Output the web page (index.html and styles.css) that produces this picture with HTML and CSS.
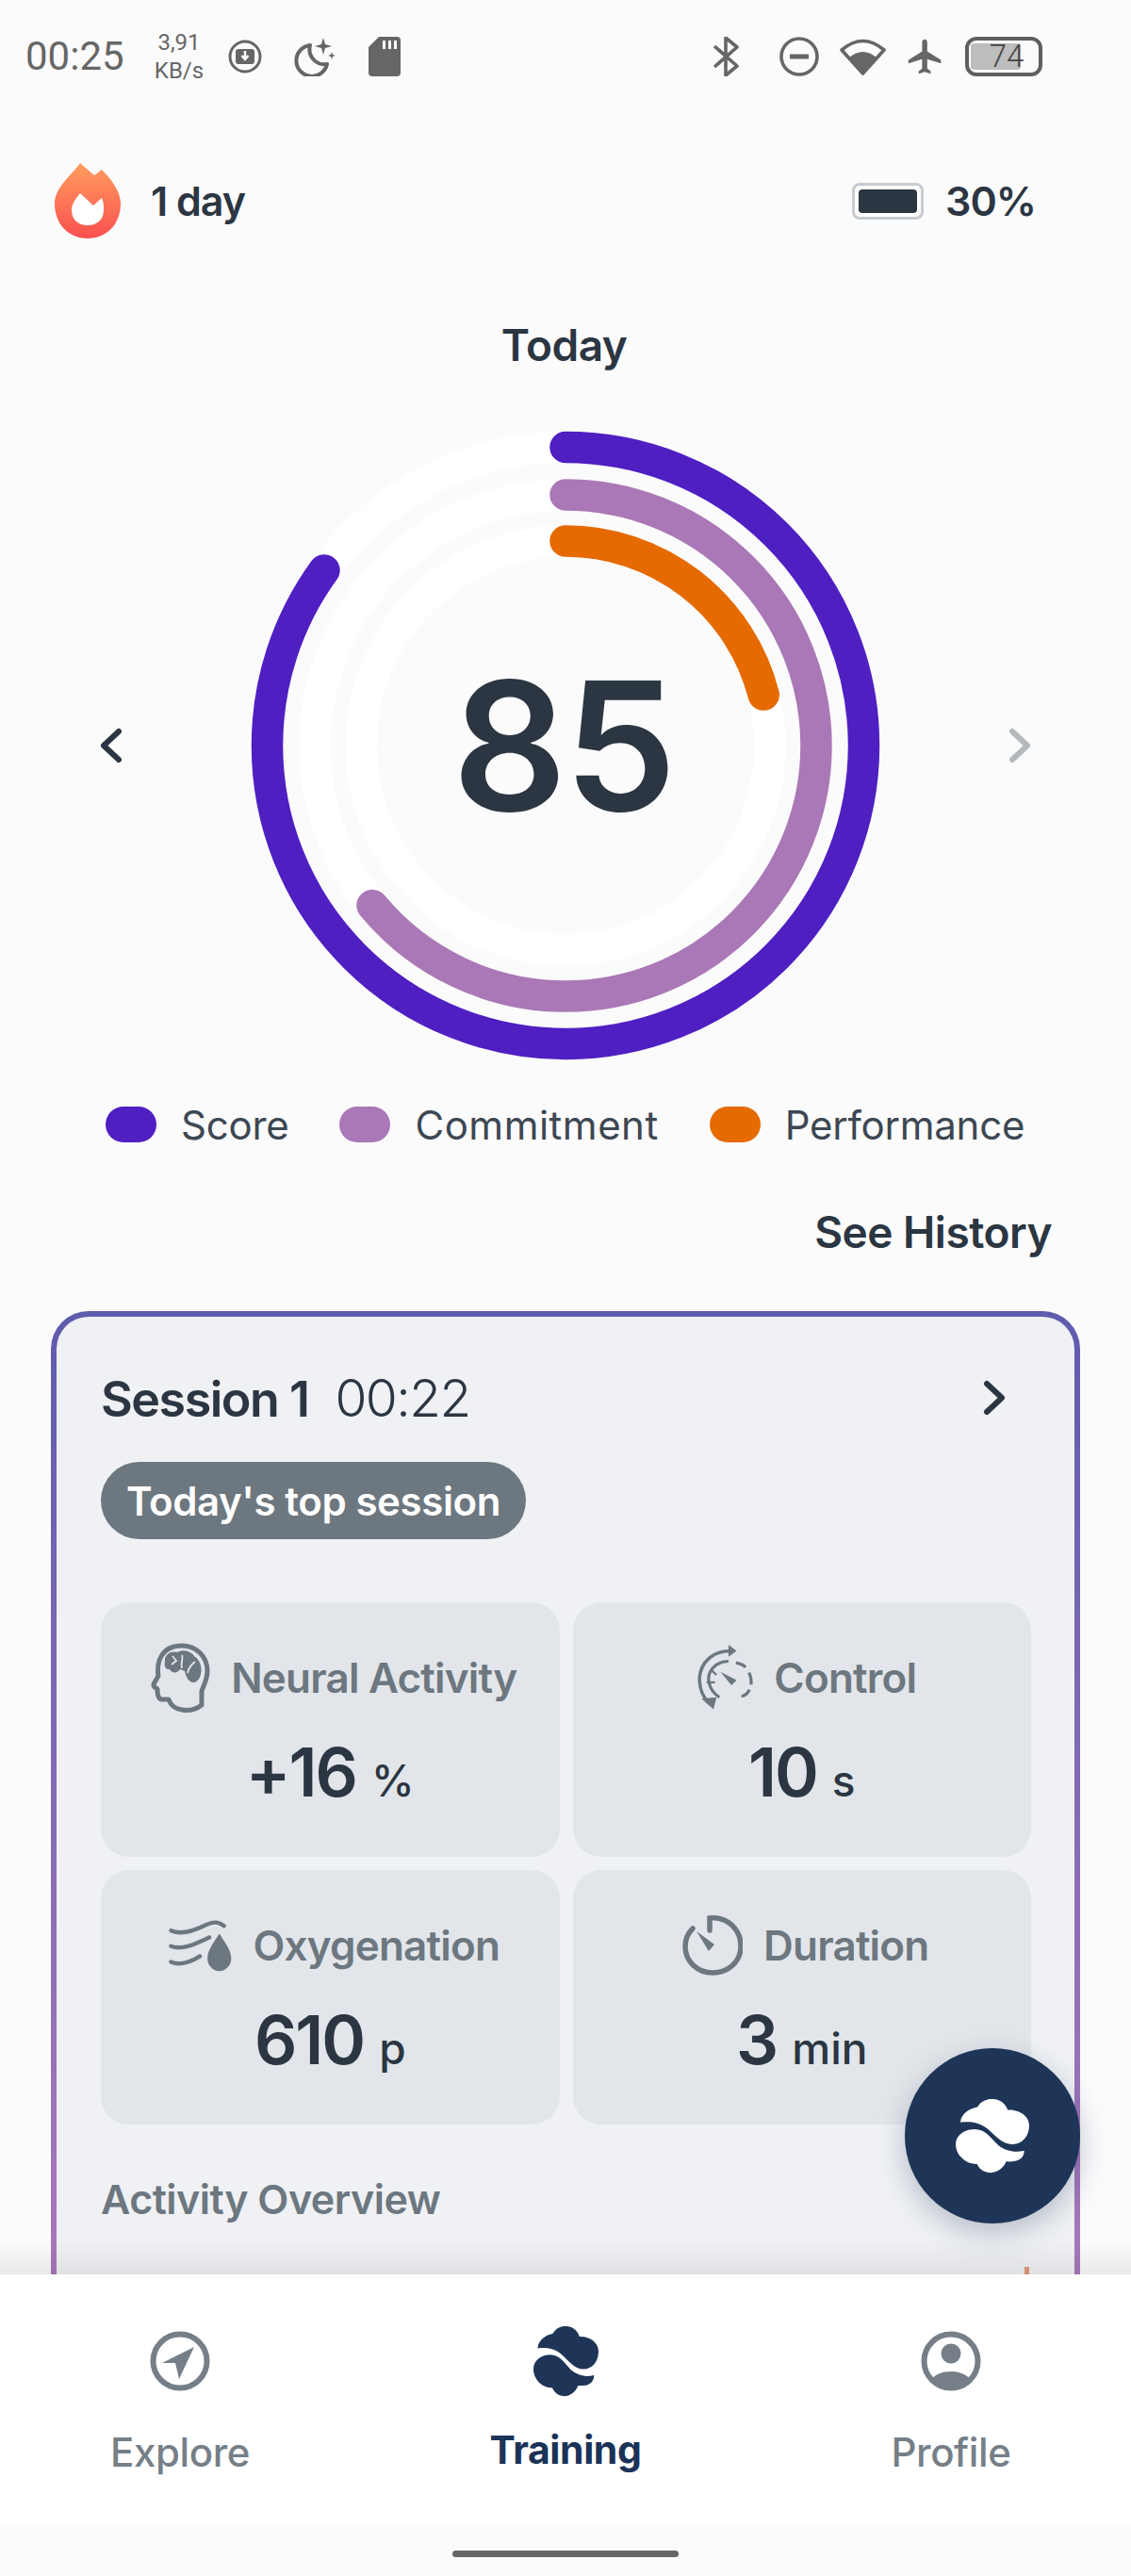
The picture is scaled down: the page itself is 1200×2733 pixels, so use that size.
FILE: index.html
```html
<!DOCTYPE html>
<html lang="en">
  <head>
    <meta charset="UTF-8" />
    <meta name="viewport" content="width=device-width, initial-scale=1.0" />
    <title>Training</title>
    <link rel="stylesheet" href="styles.css">
  </head>
  <body>
    <svg class="defs" xmlns="http://www.w3.org/2000/svg">
      <symbol id="logo" viewBox="45 48 233 240" preserveAspectRatio="none">
        <path d="M60 125C62 100 85 82 115 76C125 55 150 48 170 52C190 55 205 70 210 86C245 84 278 105 278 135C278 170 255 195 225 195C190 195 170 165 145 145C120 125 90 122 60 125Z" />
        <path d="M262 215C262 245 235 252 205 250C195 275 170 288 150 285C130 283 118 270 113 258C75 258 45 228 45 195C45 165 75 147 105 147C140 147 155 175 180 198C205 218 235 222 262 215Z" />
      </symbol>
      <symbol id="chevron" viewBox="0 0 24 38">
        <path d="M4 4L20 19L4 34" fill="none" stroke="currentColor" stroke-width="6" stroke-linecap="round" stroke-linejoin="round" />
      </symbol>
    </svg>

    <div class="phone">
      <div class="status-bar">
        <div class="status-left">
          <span class="clock">00:25</span>
          <span class="speed"><span>3,91</span><span>KB/s</span></span>
          <svg class="sys-icon" width="36" height="36" viewBox="0 0 36 36">
            <circle cx="18" cy="18" r="16" fill="none" stroke="#666" stroke-width="3" />
            <rect x="8" y="10" width="20" height="16" rx="3" fill="#666" />
            <path d="M18 12v7M14.500 17l3.500 4 3.500-4" fill="none" stroke="#fff" stroke-width="2.400" />
          </svg>
          <svg class="sys-icon moon" width="44" height="41" viewBox="0 0 44 41">
            <path d="M17 8A16.500 16.500 0 1 0 35 28C24 30 14 20 17 8Z" fill="none" stroke="#666" stroke-width="4" stroke-linejoin="round" />
            <path d="M31 0L33 7L40 9L33 11L31 18L29 11L22 9L29 7Z M40 15L41 18L44 19L41 20L40 23L39 20L36 19L39 18Z" fill="#666" />
          </svg>
          <svg class="sys-icon sd" width="34" height="42" viewBox="0 0 34 42">
            <path d="M11 0H30a4 4 0 0 1 4 4V38a4 4 0 0 1-4 4H4a4 4 0 0 1-4-4V11Z" fill="#666" />
            <path d="M15 4h3v9h-3zM21 4h3v9h-3zM27 4h3v9h-3z" fill="#fff" />
          </svg>
        </div>
        <div class="status-right">
          <svg class="bluetooth" width="28" height="42" viewBox="0 0 28 42">
            <path d="M2 10L26 31L14 41V1L26 11L2 32" fill="none" stroke="#666" stroke-width="3.600" stroke-linejoin="round" />
          </svg>
          <svg width="42" height="42" viewBox="0 0 42 42">
            <circle cx="21" cy="21" r="19" fill="none" stroke="#666" stroke-width="3.600" />
            <path d="M11 21H31" stroke="#666" stroke-width="5" />
          </svg>
          <svg width="49" height="41" viewBox="0 0 49 41">
            <path d="M24.500 38L2 13Q24.500 -6 47 13Z" fill="none" stroke="#666" stroke-width="3.600" stroke-linejoin="round" />
            <path d="M24.500 38L10 21Q24.500 9 39 21Z" fill="#666" />
          </svg>
          <svg width="40" height="42" viewBox="1 1.500 22 21">
            <path d="M21 16v-2l-8-5V3.500c0-.83-.67-1.500-1.500-1.500S10 2.670 10 3.500V9l-8 5v2l8-2.500V19l-2 1.500V22l3.500-1 3.500 1v-1.500L13 19v-5.500l8 2.500z" fill="#666" />
          </svg>
          <div class="sys-battery"><span class="sys-battery-fill"></span><span class="sys-battery-text">74</span></div>
        </div>
      </div>

      <div class="content">
        <div class="top-row">
          <div class="top-item">
            <svg class="flame" width="70" height="80" viewBox="0 0 70 80">
              <defs>
                <linearGradient id="flame-fill" x1="0" y1="0" x2="0" y2="1">
                  <stop offset="0" stop-color="#ff9d5e" />
                  <stop offset="1" stop-color="#fa5050" />
                </linearGradient>
              </defs>
              <path d="M27 0L42 13L50 7C60 17 70 30 70 43C70 65 55 80 35 80C15 80 0 65 0 43C0 26 17 14 27 0Z" fill="url(#flame-fill)" />
              <path d="M27 32L41 45L50 37C52 42 52 45 52 50C52 60 45 66 35 66C25 66 18 60 18 50C18 43 23 37 27 32Z" fill="#fff" />
            </svg>
            <span class="top-text">1 day</span>
          </div>
          <div class="top-item battery-item">
            <div class="device-battery"><span class="device-battery-fill"></span></div>
            <span class="top-text">30%</span>
          </div>
        </div>

        <h1 class="today">Today</h1>

        <div class="ring-row">
          <svg class="chevron-nav" width="24" height="38"><use href="#chevron" transform="matrix(-1 0 0 1 24 0)" /></svg>
          <div class="ring">
            <svg class="ring-svg" width="680" height="680" viewBox="0 0 680 680">
              <g fill="none" stroke-width="33.500" stroke-linecap="round">
                <circle cx="340" cy="340" r="316.500" stroke="#fff" />
                <circle cx="340" cy="340" r="266" stroke="#fff" />
                <circle cx="340" cy="340" r="217" stroke="#fff" />
                <circle class="arc" cx="340" cy="340" r="316.500" stroke="#4f1fc2" pathLength="100" stroke-dasharray="85 100" />
                <circle class="arc" cx="340" cy="340" r="266" stroke="#aa78b6" pathLength="100" stroke-dasharray="64 100" />
                <circle class="arc" cx="340" cy="340" r="217" stroke="#e56a00" pathLength="100" stroke-dasharray="21 100" />
              </g>
            </svg>
            <span class="ring-score">85</span>
          </div>
          <svg class="chevron-nav disabled" width="24" height="38"><use href="#chevron" /></svg>
        </div>

        <div class="legend">
          <span class="legend-item"><span class="dot dot-score"></span>Score</span>
          <span class="legend-item wide"><span class="dot dot-commitment"></span>Commitment</span>
          <span class="legend-item"><span class="dot dot-performance"></span>Performance</span>
        </div>

        <div class="see-history">See History</div>

        <div class="session-card">
          <div class="session-head">
            <div class="session-title"><strong>Session 1</strong><span>00:22</span></div>
            <svg class="session-chevron" width="24" height="38"><use href="#chevron" /></svg>
          </div>
          <span class="top-pill">Today's top session</span>

          <div class="stats">
            <div class="stat">
              <div class="stat-head">
                <svg width="63" height="75" viewBox="0 0 63 75">
                  <path d="M33 3C48 3 60 14 60 30C60 39 56 45 54 51V66C46 72 38 72 33 71C26 70 21 66 19 60H12C8 60 7 55 7 49C3 47 2 45 4 42L8 35C6 22 10 3 33 3Z" fill="none" stroke="currentColor" stroke-width="5" stroke-linejoin="round" />
                  <path d="M15 20C14 12 22 8 28 10C33 7 42 8 46 14C52 18 55 26 53 33C52 40 46 44 42 41C38 38 37 34 36 30L31 28C28 33 22 32 20 28C15 28 14 24 15 20Z" fill="currentColor" />
                  <path d="M23 14L27 19L22 23M33 13C35 17 31 21 33 27M47 20C43 23 40 27 39 32" fill="none" stroke="#e2e6ea" stroke-width="1.800" />
                </svg>
                <span>Neural Activity</span>
              </div>
              <div class="stat-value">+16<span class="unit">%</span></div>
            </div>
            <div class="stat">
              <div class="stat-head">
                <svg width="62" height="70" viewBox="22 25 195 220">
                  <g fill="none" stroke="currentColor" stroke-width="11">
                    <path d="M72 222C30 180 25 110 70 70C90 52 115 45 145 45" />
                    <path d="M105 200C70 180 55 130 85 100C100 85 120 80 135 80" stroke-width="10" />
                    <path d="M160 85C175 88 185 92 192 100M203 118C212 135 212 145 210 158M205 175C200 187 190 195 178 197" stroke-width="10" />
                    <path d="M62 150H90M80 112L95 125" stroke-width="7" />
                  </g>
                  <path d="M135 25L162 45L135 65ZM45 205L85 240L95 200Z M108 115L162 143L145 160Z" fill="currentColor" />
                </svg>
                <span>Control</span>
              </div>
              <div class="stat-value">10<span class="unit">s</span></div>
            </div>
            <div class="stat">
              <div class="stat-head">
                <svg width="68" height="58" viewBox="85 20 205 175">
                  <g fill="none" stroke="currentColor" stroke-width="13" stroke-linecap="round">
                    <path d="M95 60C130 75 170 60 200 45C235 28 250 33 265 45" />
                    <path d="M95 110C130 123 170 105 218 82" />
                    <path d="M95 160C125 173 160 160 188 142" />
                  </g>
                  <path d="M250 70C265 95 288 120 288 150C288 172 270 190 250 190C230 190 212 172 212 150C212 120 235 95 250 70Z" fill="currentColor" />
                </svg>
                <span>Oxygenation</span>
              </div>
              <div class="stat-value">610<span class="unit">p</span></div>
            </div>
            <div class="stat">
              <div class="stat-head">
                <svg width="64" height="64" viewBox="0 0 64 64">
                  <path d="M29 16V3C48 1 62 15 62 33C62 49 49 61 32 61C16 61 3 49 3 33C3 25 6 19 11 14" fill="none" stroke="currentColor" stroke-width="5.500" stroke-linecap="round" />
                  <path d="M15 17L34 31L28 38Z" fill="currentColor" />
                </svg>
                <span>Duration</span>
              </div>
              <div class="stat-value">3<span class="unit">min</span></div>
            </div>
          </div>

          <h2 class="overview">Activity Overview</h2>
          <div class="chart-peak"></div>
        </div>

        <div class="fab"><svg width="78" height="80"><use href="#logo" /></svg></div>
        <div class="nav-shadow"></div>
      </div>

      <nav class="bottom-nav">
        <div class="nav-item">
          <svg class="nav-icon" width="64" height="76" viewBox="0 -6 64 76">
            <circle cx="32" cy="32" r="28.500" fill="none" stroke="currentColor" stroke-width="6" />
            <path d="M47 17L13 34H27L31 51Z" fill="currentColor" />
          </svg>
          <span>Explore</span>
        </div>
        <div class="nav-item active">
          <svg class="nav-icon" width="69" height="76"><use href="#logo" /></svg>
          <span>Training</span>
        </div>
        <div class="nav-item">
          <svg class="nav-icon" width="64" height="76" viewBox="0 -6 64 76">
            <circle cx="32" cy="32" r="28.500" fill="none" stroke="currentColor" stroke-width="6" />
            <circle cx="32" cy="24" r="10.500" fill="currentColor" />
            <path d="M11 52C15 46 23 43 32 43C41 43 49 46 53 52C47 58 40 61 32 61C24 61 17 58 11 52Z" fill="currentColor" />
          </svg>
          <span>Profile</span>
        </div>
      </nav>

      <div class="home-area"><span class="home-bar"></span></div>
    </div>
  </body>
</html>
```

FILE: styles.css
```css
:root {
  --ink: #2b3642;
  --muted: #6d7780;
  --navy: #1f3557;
  --page: #fbfbfc;
}

* {
  box-sizing: border-box;
}

body {
  margin: 0;
  width: 1200px;
  height: 2733px;
  background: var(--page);
  font-family: "Inter", "Liberation Sans", sans-serif;
  color: var(--ink);
}

.defs {
  display: none;
}

.phone {
  width: 1200px;
  height: 2733px;
  display: flex;
  flex-direction: column;
  overflow: hidden;
}

/* status bar */
.status-bar {
  height: 120px;
  flex: none;
  display: flex;
  align-items: center;
  justify-content: space-between;
  padding: 0 94px 0 27px;
  font-family: "Roboto", sans-serif;
  color: #666;
}

.status-left,
.status-right {
  display: flex;
  align-items: center;
}

.clock {
  font-size: 42px;
  width: 135px;
  line-height: 42px;
}

.speed {
  display: flex;
  flex-direction: column;
  align-items: center;
  width: 56px;
  font-size: 24px;
  line-height: 30px;
}

.sys-icon {
  margin-left: 24px;
}

.moon {
  margin-left: 34px;
}

.sd {
  margin-left: 35px;
}

.status-right {
  gap: 22px;
}

.bluetooth {
  margin-right: 21px;
}

.sys-battery {
  position: relative;
  width: 82px;
  height: 42px;
  border: 4px solid #5f5f5f;
  border-radius: 12px;
  display: flex;
  align-items: center;
  justify-content: center;
}

.sys-battery-fill {
  position: absolute;
  left: 2px;
  top: 3px;
  bottom: 3px;
  width: 53px;
  background: #bdbdbd;
  border-radius: 3px;
}

.sys-battery-text {
  position: relative;
  font-size: 33px;
  font-weight: 300;
  line-height: 34px;
  margin-left: 6px;
  color: #444;
}

/* scrolling content */
.content {
  position: relative;
  flex: 1;
  min-height: 0;
  overflow: hidden;
}

.top-row {
  display: flex;
  justify-content: space-between;
  align-items: center;
  height: 80px;
  margin-top: 53px;
  padding: 0 101px 0 58px;
}

.top-item {
  display: flex;
  align-items: center;
  gap: 32px;
}

.battery-item {
  gap: 23px;
}

.top-text {
  font-size: 43px;
  font-weight: 600;
  letter-spacing: -1px;
}

.device-battery {
  width: 76px;
  height: 39px;
  padding: 4px;
  border: 3px solid #c6cbd0;
  border-radius: 8px;
  background: #fff;
}

.device-battery-fill {
  display: block;
  height: 100%;
  background: var(--ink);
  border-radius: 4px;
}

.today {
  margin: 88px 0 0;
  font-size: 46px;
  line-height: 50px;
  font-weight: 600;
  text-align: center;
  letter-spacing: -0.5px;
  padding-right: 3px;
}

.ring-row {
  display: flex;
  align-items: center;
  justify-content: space-between;
  margin-top: 60px;
  padding: 0 106px;
}

.chevron-nav {
  color: var(--ink);
}

.chevron-nav.disabled {
  color: #b3b8bd;
}

.ring {
  display: grid;
  place-items: center;
}

.ring-svg,
.ring-score {
  grid-area: 1 / 1;
}

.arc {
  transform: rotate(-90deg);
  transform-origin: 340px 340px;
}

.ring-score {
  padding-right: 5px;
  font-size: 190px;
  font-weight: 600;
  line-height: 1;
  letter-spacing: -3px;
}

.legend {
  display: flex;
  align-items: center;
  gap: 54px;
  height: 50px;
  margin-top: 37px;
  padding-left: 112px;
  font-size: 42px;
  letter-spacing: -0.25px;
  color: #3d4752;
}

.legend-item {
  display: flex;
  align-items: center;
  gap: 26px;
}

.legend-item.wide {
  letter-spacing: 0.5px;
}

.dot {
  width: 54px;
  height: 38px;
  border-radius: 19px;
}

.dot-score {
  background: #4f1fc2;
}

.dot-commitment {
  background: #aa78b6;
}

.dot-performance {
  background: #e56a00;
}

.see-history {
  margin-top: 64px;
  padding-right: 84px;
  text-align: right;
  font-size: 46px;
  line-height: 50px;
  font-weight: 600;
  letter-spacing: -0.5px;
}

/* session card */
.session-card {
  margin: 59px 54px 0;
  height: 1130px;
  padding: 56px 46px 0 47px;
  border: 6px solid transparent;
  border-radius: 40px;
  background: linear-gradient(#eff1f4, #eff1f4) padding-box,
    linear-gradient(#5f5cae, #b07cbc) border-box;
}

.session-head {
  display: flex;
  align-items: center;
  justify-content: space-between;
  height: 60px;
  padding-right: 27px;
}

.session-title {
  display: flex;
  align-items: baseline;
  gap: 28px;
  font-size: 52px;
  letter-spacing: -1.500px;
}

.session-title strong {
  font-weight: 600;
}

.session-title span {
  font-size: 55px;
  font-weight: 300;
}

.session-chevron {
  color: var(--ink);
}

.top-pill {
  display: inline-flex;
  align-items: center;
  height: 82px;
  margin-top: 38px;
  padding: 0 27px;
  border-radius: 41px;
  background: var(--muted);
  color: #fff;
  font-size: 42px;
  font-weight: 600;
  letter-spacing: -0.4px;
}

.stats {
  display: grid;
  grid-template-columns: 1fr 1fr;
  grid-auto-rows: 270px;
  gap: 14px;
  margin-top: 67px;
}

.stat {
  display: flex;
  flex-direction: column;
  align-items: center;
  padding-top: 42px;
  border-radius: 30px;
  background: #e2e6ea;
}

.stat-head {
  display: flex;
  align-items: center;
  justify-content: center;
  gap: 22px;
  height: 76px;
  padding-left: 8px;
  color: var(--muted);
  font-size: 44px;
  font-weight: 600;
  letter-spacing: -0.8px;
}

.stat-value {
  display: flex;
  align-items: baseline;
  gap: 16px;
  margin-top: 22px;
  font-size: 71px;
  line-height: 80px;
  font-weight: 600;
  letter-spacing: -2px;
}

.unit {
  font-size: 46px;
  font-weight: 500;
  letter-spacing: 0;
}

.overview {
  margin: 54px 0 0;
  font-size: 43px;
  line-height: 50px;
  font-weight: 600;
  color: var(--muted);
  letter-spacing: -0.5px;
}

.chart-peak {
  width: 5px;
  height: 12px;
  margin: 47px 0 0 980px;
  background: #e09a80;
}

.fab {
  position: absolute;
  left: 960px;
  top: 2053px;
  width: 186px;
  height: 186px;
  display: flex;
  align-items: center;
  justify-content: center;
  border-radius: 50%;
  background: var(--navy);
  fill: #fff;
  box-shadow: 0 10px 30px rgba(31, 53, 87, 0.28);
}

.nav-shadow {
  position: absolute;
  left: 0;
  right: 0;
  bottom: 0;
  height: 36px;
  background: linear-gradient(rgba(0, 0, 0, 0), rgba(0, 0, 0, 0.07));
}

/* bottom navigation */
.bottom-nav {
  height: 267px;
  flex: none;
  display: flex;
  gap: 27px;
  padding-top: 54px;
  background: #fff;
}

.nav-item {
  width: 382px;
  display: flex;
  flex-direction: column;
  align-items: center;
  gap: 34px;
  color: #767f88;
  font-size: 42px;
  line-height: 50px;
  font-weight: 500;
  letter-spacing: -0.4px;
}

.nav-item.active {
  gap: 31px;
  color: #1b3358;
  fill: #1f3557;
  font-size: 41px;
  font-weight: 700;
}

.home-area {
  height: 53px;
  flex: none;
  padding-top: 26px;
  display: flex;
  justify-content: center;
}

.home-bar {
  width: 240px;
  height: 7px;
  border-radius: 4px;
  background: #666;
}
```
